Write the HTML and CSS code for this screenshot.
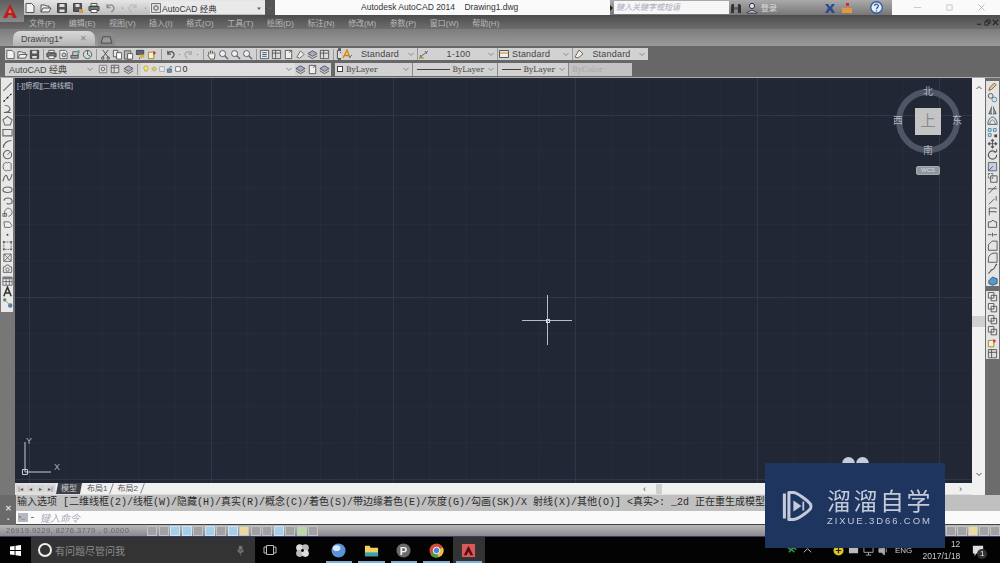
FILE: index.html
```html
<!DOCTYPE html>
<html lang="zh">
<head>
<meta charset="utf-8">
<title>AutoCAD 2014</title>
<link rel="stylesheet" href="styles.css">
</head>
<body>
<svg class="sprite" width="0" height="0">
<defs>
<symbol id="file" viewBox="0 0 12 12"><path d="M2 1.500h5.500L10 4v6.500H2z" fill="#f2f2f2" stroke="#555"/></symbol>
<symbol id="open" viewBox="0 0 12 12"><path d="M1 10V3h4l1 1h3v2M1 10l2-4h8l-2 4z" fill="#eee" stroke="#555"/></symbol>
<symbol id="save" viewBox="0 0 12 12"><path d="M1.500 1.500h9v9h-9z" fill="#555" stroke="#444"/><path d="M3.500 2h5v3h-5zM3.500 7.500h5V10h-5z" fill="#ddd"/></symbol>
<symbol id="saveas" viewBox="0 0 12 12"><path d="M1.500 1.500h8v8h-8z" fill="#556" stroke="#444"/><path d="M3.500 2h4v3h-4z" fill="#ddd"/><path d="M7 7h4v4H7z" fill="#d8964a"/></symbol>
<symbol id="print" viewBox="0 0 12 12"><path d="M3 1.500h6V4H3z" fill="#eee" stroke="#555"/><path d="M1 4.500h10v4H1z" fill="#777" stroke="#444"/><path d="M3 7.500h6v3H3z" fill="#fff" stroke="#555"/></symbol>
<symbol id="preview" viewBox="0 0 12 12"><path d="M2 1.500h6l2 2v7H2z" fill="#eee" stroke="#666"/><circle cx="6.500" cy="6.500" r="2.200" fill="#bcd" stroke="#555"/></symbol>
<symbol id="plot" viewBox="0 0 12 12"><path d="M3 3h6v4H3z" fill="#ccd" stroke="#555"/><path d="M1 7h8v3H1z" fill="#999" stroke="#555"/><circle cx="9" cy="3" r="2" fill="#6a9"/></symbol>
<symbol id="globe" viewBox="0 0 12 12"><circle cx="6" cy="6" r="4.500" fill="#cdd" stroke="#555"/><path d="M6 1.500V6l3 2" fill="none" stroke="#555"/></symbol>
<symbol id="cut" viewBox="0 0 12 12"><path d="M3 1l6 8M9 1L3 9" stroke="#444" fill="none"/><circle cx="3" cy="10" r="1.300" fill="none" stroke="#444"/><circle cx="9" cy="10" r="1.300" fill="none" stroke="#444"/></symbol>
<symbol id="copy" viewBox="0 0 12 12"><path d="M1.500 1.500h5v7h-5z" fill="#eee" stroke="#555"/><path d="M5 4h5.500v7H5z" fill="#fff" stroke="#555"/></symbol>
<symbol id="paste" viewBox="0 0 12 12"><path d="M1.500 2h7v9h-7z" fill="#bbb" stroke="#555"/><path d="M5 5h5.500v6H5z" fill="#fff" stroke="#555"/></symbol>
<symbol id="match" viewBox="0 0 12 12"><path d="M1.500 1.500h8V6h-8z" fill="#567" stroke="#444"/><path d="M5 6h5v3.500H5z" fill="#d8b04a"/><path d="M5 9.500V11" stroke="#444"/></symbol>
<symbol id="block" viewBox="0 0 12 12"><path d="M1.500 3.500h6v7h-6z" fill="#eee" stroke="#a80"/><path d="M7 2l3 2-3 3z" fill="#c33"/></symbol>
<symbol id="undo" viewBox="0 0 12 12"><path d="M3 5c2-3 6-3 7 1 0 2-1 3-3 4M3 2v3.500h3.500" fill="none" stroke="#555" stroke-width="1.300"/></symbol>
<symbol id="redo" viewBox="0 0 12 12"><path d="M9 5C7 2 3 2 2 6c0 2 1 3 3 4M9 2v3.500H5.500" fill="none" stroke="#aaa" stroke-width="1.300"/></symbol>
<symbol id="caret" viewBox="0 0 12 12"><path d="M4 5.500h4L6 8z" fill="#666"/></symbol>
<symbol id="hand" viewBox="0 0 12 12"><path d="M3 6V3m2 2V1.500M7 5V2m2 3.500V3.500M3 6L2 6.500 4.500 11H9l1-5.500" fill="#eee" stroke="#555"/></symbol>
<symbol id="zoom" viewBox="0 0 12 12"><circle cx="5" cy="5" r="3.300" fill="#eef" stroke="#555"/><path d="M7.500 7.500L11 11" stroke="#555" stroke-width="1.400"/></symbol>
<symbol id="panel" viewBox="0 0 12 12"><path d="M1.500 1.500h9v9h-9z" fill="#eee" stroke="#555"/><path d="M3.500 4h5M3.500 6h5M3.500 8h5" stroke="#357"/></symbol>
<symbol id="panel2" viewBox="0 0 12 12"><path d="M1.500 1.500h9v9h-9z" fill="#ddd" stroke="#555"/><path d="M1.500 4.500h9M5 1.500v9" stroke="#555"/></symbol>
<symbol id="sheet" viewBox="0 0 12 12"><path d="M2.500 1.500h7v9h-7z" fill="#eee" stroke="#555"/><path d="M6.500 4l3-2.500" stroke="#555"/></symbol>
<symbol id="help" viewBox="0 0 12 12"><path d="M1.500 1.500h9v9h-9z" fill="#ddd" stroke="#444"/><path d="M4.500 4.500c0-2 3-2 3 0 0 1-1.500 1-1.500 2.500M6 8.200v1" fill="none" stroke="#333"/></symbol>
<symbol id="line" viewBox="0 0 12 12"><path d="M1.500 10.500l9-9" stroke="#666" stroke-width="1.200"/></symbol>
<symbol id="xline" viewBox="0 0 12 12"><path d="M1.500 10.500l9-9" stroke="#666"/><circle cx="6" cy="6" r="1" fill="#222"/><circle cx="2.500" cy="9.500" r=".9" fill="#222"/><circle cx="9.500" cy="2.500" r=".9" fill="#222"/></symbol>
<symbol id="pline" viewBox="0 0 12 12"><path d="M3 1.500c5 0 7 3 5 5.500-1 1.500-4 2-6 2M3 9h7" fill="none" stroke="#666" stroke-width="1.200"/></symbol>
<symbol id="poly" viewBox="0 0 12 12"><path d="M6 1.200L11 5 9 10.800H3L1 5z" fill="none" stroke="#666" stroke-width="1.100"/></symbol>
<symbol id="rect" viewBox="0 0 12 12"><path d="M1 2.500h10v7H1z" fill="none" stroke="#666" stroke-width="1.200"/></symbol>
<symbol id="arc" viewBox="0 0 12 12"><path d="M1.500 10.500c0-5 4-8 9-8" fill="none" stroke="#666" stroke-width="1.300"/></symbol>
<symbol id="circle" viewBox="0 0 12 12"><circle cx="6" cy="6" r="4.500" fill="none" stroke="#666" stroke-width="1.200"/><path d="M6 6l3-3" stroke="#666"/></symbol>
<symbol id="cloud" viewBox="0 0 12 12"><path d="M2 3c1-2 3-2 4-1 1-1 3-1 4 1v6c-1 2-3 1-4 1-2 1-3 0-4-1C1 7 1 5 2 3z" fill="none" stroke="#666"/></symbol>
<symbol id="spline" viewBox="0 0 12 12"><path d="M1 10c2-8 4-8 5-4s3 4 5-4" fill="none" stroke="#666" stroke-width="1.200"/></symbol>
<symbol id="ellipse" viewBox="0 0 12 12"><ellipse cx="6" cy="6" rx="5" ry="3" fill="none" stroke="#666" stroke-width="1.200"/></symbol>
<symbol id="earc" viewBox="0 0 12 12"><path d="M2 6c1-4 8-4 9 0s-4 4-6 3" fill="none" stroke="#666" stroke-width="1.200"/></symbol>
<symbol id="insert" viewBox="0 0 12 12"><path d="M3 11V5l3-3c3 0 5 2 5 5 0 2-2 4-4 4M1 8h4v3H1z" fill="none" stroke="#666"/></symbol>
<symbol id="mkblock" viewBox="0 0 12 12"><path d="M2 4h6l3 4-2 2H3z" fill="#eee" stroke="#666"/></symbol>
<symbol id="dot" viewBox="0 0 12 12"><circle cx="6" cy="6" r="1.100" fill="#444"/></symbol>
<symbol id="hatch" viewBox="0 0 12 12"><path d="M2 2h8v8H2z" fill="none" stroke="#666" stroke-dasharray="2 1"/><path d="M1 1h2v2H1zM9 1h2v2H9zM1 9h2v2H1zM9 9h2v2H9z" fill="#666"/></symbol>
<symbol id="grad" viewBox="0 0 12 12"><path d="M2 2l8 8M10 2l-8 8M2 2h8v8H2z" fill="none" stroke="#666"/></symbol>
<symbol id="region" viewBox="0 0 12 12"><path d="M1.500 4h2l1-2h3l1 2h2v6h-9z" fill="none" stroke="#666"/><circle cx="6" cy="7" r="1.800" fill="none" stroke="#666"/></symbol>
<symbol id="table" viewBox="0 0 12 12"><path d="M1 2h10v9H1z" fill="#eee" stroke="#666"/><path d="M1 2h10v2.500H1z" fill="#778"/><path d="M1 7h10M4.500 4.500V11M8 4.500V11" stroke="#666"/></symbol>
<symbol id="txt" viewBox="0 0 12 12"><path d="M2 11L6 1l4 10M3.500 7.500h5" fill="none" stroke="#333" stroke-width="1.700"/></symbol>
<symbol id="addsel" viewBox="0 0 12 12"><circle cx="3" cy="3" r="1.800" fill="#4a8a4a"/><circle cx="9" cy="9" r="2.400" fill="#57a"/><path d="M3 3l6 6" stroke="#7a7"/></symbol>
<symbol id="pencil" viewBox="0 0 12 12"><path d="M2 10l1-3 5-5 2 2-5 5z" fill="#e8c890" stroke="#764"/></symbol>
<symbol id="copyobj" viewBox="0 0 12 12"><circle cx="4" cy="4" r="2.600" fill="none" stroke="#555"/><circle cx="8" cy="8" r="2.600" fill="none" stroke="#48a"/></symbol>
<symbol id="mirror" viewBox="0 0 12 12"><path d="M6 1.500l4 9H2z" fill="#89a" stroke="#555"/><path d="M6 1v10" stroke="#eee"/></symbol>
<symbol id="offset" viewBox="0 0 12 12"><path d="M1 10c0-5 3-8 5-8s5 3 5 8z" fill="none" stroke="#555"/><path d="M3 10c0-3 2-5 3-5s3 2 3 5" fill="none" stroke="#48a"/></symbol>
<symbol id="array" viewBox="0 0 12 12"><path d="M1.500 1.500h3v3h-3zM7 1.500h3v3H7zM1.500 7h3v3h-3z" fill="none" stroke="#48a"/><path d="M8 8h3v3H8z" fill="#444"/></symbol>
<symbol id="move" viewBox="0 0 12 12"><path d="M6 1v10M1 6h10M6 1L4.500 3h3zM6 11L4.500 9h3zM1 6l2-1.500v3zM11 6L9 4.500v3z" fill="#555" stroke="#555"/></symbol>
<symbol id="rotate" viewBox="0 0 12 12"><path d="M9.500 3.500A4.500 4.500 0 1 0 10.500 6" fill="none" stroke="#555" stroke-width="1.200"/><path d="M7 3h3.500V0" fill="none" stroke="#555"/></symbol>
<symbol id="scale" viewBox="0 0 12 12"><path d="M1.500 1.500h9v9h-9z" fill="#ccd" stroke="#567"/><path d="M1.500 10.500l5-5" stroke="#456"/></symbol>
<symbol id="stretch" viewBox="0 0 12 12"><path d="M1.500 1.500h5v5h-5z" fill="none" stroke="#555" stroke-dasharray="2 1"/><path d="M4 4h7v7H4z" fill="none" stroke="#555"/></symbol>
<symbol id="trim" viewBox="0 0 12 12"><path d="M2 10L10 2M1 5h10" stroke="#555" fill="none"/></symbol>
<symbol id="extend" viewBox="0 0 12 12"><path d="M2 10l6-6M10 1v5" stroke="#555" fill="none"/></symbol>
<symbol id="brk" viewBox="0 0 12 12"><path d="M2.500 10V2H10M2.500 6H10M10 2v1M10 6v1" stroke="#555" fill="none"/></symbol>
<symbol id="brk2" viewBox="0 0 12 12"><path d="M1.500 4h3l1-1.500h2L8.500 4h2v6h-9z" fill="none" stroke="#555"/></symbol>
<symbol id="join" viewBox="0 0 12 12"><path d="M1 6h4M7 6h4M6 4v4" stroke="#555"/></symbol>
<symbol id="chamfer" viewBox="0 0 12 12"><path d="M1.500 11V5l4-4H11v10z" fill="none" stroke="#555"/></symbol>
<symbol id="fillet" viewBox="0 0 12 12"><path d="M1.500 11V7c0-3 3-6 6-6H11v10z" fill="none" stroke="#555"/></symbol>
<symbol id="blend" viewBox="0 0 12 12"><path d="M1 11c3 0 2-4 5-4s2-5 5-6" fill="none" stroke="#555" stroke-width="1.200"/></symbol>
<symbol id="explode" viewBox="0 0 12 12"><path d="M2 6l4-4 5 2v5l-5 2-4-2z" fill="#5a9ac8" stroke="#357"/></symbol>
<symbol id="draw" viewBox="0 0 12 12"><path d="M1.500 1.500h6v6h-6z" fill="#eee" stroke="#555"/><path d="M4.500 4.500h6v6h-6z" fill="none" stroke="#555"/></symbol>
<symbol id="bulb" viewBox="0 0 12 12"><path d="M6 1a3.500 3.500 0 0 1 2 6.300V9H4V7.300A3.500 3.500 0 0 1 6 1z" fill="#f2e27a" stroke="#a93"/></symbol>
<symbol id="sun" viewBox="0 0 12 12"><circle cx="6" cy="6" r="2.300" fill="#f0d860" stroke="#a93"/><path d="M6 1v1.500M6 9.500V11M1 6h1.500M9.500 6H11M2.500 2.500l1 1M8.500 8.500l1 1M2.500 9.500l1-1M8.500 3.500l1-1" stroke="#a93"/></symbol>
<symbol id="lock" viewBox="0 0 12 12"><path d="M2 6h6v5H2z" fill="#79b" stroke="#357"/><path d="M6 6V3.500c0-2 3-2 3 0" fill="none" stroke="#357"/></symbol>
<symbol id="box" viewBox="0 0 12 12"><path d="M2.500 2.500h7v7h-7z" fill="#fff" stroke="#444"/></symbol>
<symbol id="layers" viewBox="0 0 12 12"><path d="M1 5l5-3 5 3-5 3z" fill="#aac" stroke="#555"/><path d="M1 7.500l5 3 5-3" fill="none" stroke="#555"/></symbol>
<symbol id="gear" viewBox="0 0 12 12"><path d="M1.500 1.500h9v9h-9z" fill="#ddd" stroke="#777"/><circle cx="6" cy="6" r="2.200" fill="none" stroke="#555"/></symbol>
<symbol id="txtstyle" viewBox="0 0 12 12"><path d="M2 10L6 2l3 8M3.500 7.500h4" fill="none" stroke="#c80" stroke-width="1.300"/><path d="M8 10l3-3" stroke="#56a"/></symbol>
<symbol id="dim" viewBox="0 0 12 12"><path d="M1 10l9-7M2 7l2 3M7 3l2 3" stroke="#666" fill="none"/><path d="M1 10h5" stroke="#c80"/></symbol>
<symbol id="tbl2" viewBox="0 0 12 12"><path d="M1.500 2.500h9v7h-9z" fill="#eee" stroke="#555"/><path d="M1.500 5h9" stroke="#c80"/></symbol>
<symbol id="ml" viewBox="0 0 12 12"><path d="M2 9l4-7 4 4-5 4z" fill="#eee" stroke="#765"/></symbol>
<symbol id="chev" viewBox="0 0 8 8"><path d="M1.500 3l2.500 2.500L6.500 3" fill="none" stroke="#888" stroke-width="1"/></symbol>
</defs>
</svg>

<div class="app">
  <header class="titlebar">
    <div class="logo-btn"><svg class="logo-a" viewBox="0 0 16 16"><path d="M8 1l7 14H11L9.500 12h-3L5 15H1z" fill="#b8201c"/><path d="M6 10h4L8 5.500z" fill="#e86a60"/></svg></div>
    <div class="qat">
      <svg class="ti"><use href="#file"/></svg><svg class="ti"><use href="#open"/></svg><svg class="ti"><use href="#save"/></svg><svg class="ti"><use href="#saveas"/></svg><svg class="ti"><use href="#print"/></svg><svg class="ti dimmed"><use href="#undo"/></svg><svg class="ti small"><use href="#caret"/></svg><svg class="ti dimmed"><use href="#redo"/></svg><svg class="ti small"><use href="#caret"/></svg>
      <div class="ws-combo"><svg class="ti"><use href="#gear"/></svg><span class="ws-name">AutoCAD 经典</span><svg class="ti tail"><use href="#caret"/></svg></div>
    </div>
    <div class="qat-end"><svg class="ti"><use href="#caret"/></svg></div>
    <div class="title">Autodesk AutoCAD 2014 &nbsp;&nbsp; Drawing1.dwg</div>
    <div class="infobar">
      <span class="play"></span>
      <span class="search">键入关键字或短语</span>
      <svg class="ti bino" viewBox="0 0 12 12"><path d="M1 11V4l1-2h2v9zM11 11V4l-1-2H8v9z" fill="#333"/><path d="M4 5h4v3H4z" fill="#666"/></svg>
      <svg class="ti user" viewBox="0 0 12 12"><circle cx="6" cy="4" r="2.600" fill="#dde" stroke="#334"/><path d="M1 11c1-3 9-3 10 0z" fill="#eef" stroke="#334"/></svg>
      <span class="login">登录</span>
      <span class="spacer"></span>
      <svg class="ti x-ex" viewBox="0 0 12 12"><path d="M1 2h3l2 3 2-3h3L8 6l3 5H8L6 8l-2 3H1l3-5z" fill="#2c4a8e"/></svg>
      <svg class="ti cart" viewBox="0 0 12 12"><path d="M5 1h3v3H5z" fill="#d24"/><path d="M1 6h10v5H1z" fill="#e09a3c"/></svg>
      <svg class="ti help-i" viewBox="0 0 12 12"><circle cx="6" cy="6" r="5.300" fill="#e8eef8" stroke="#2d5c9e" stroke-width="1.200"/><path d="M4.300 4.600c0-2.400 3.600-2.200 3.400 0C7.600 6 6 6 6 7.500M6 8.500v1.200" fill="none" stroke="#2d5c9e" stroke-width="1.200"/></svg>
    </div>
    <div class="winctl">
      <svg class="wc" viewBox="0 0 12 12"><path d="M1 6h10" stroke="#bbb"/></svg>
      <svg class="wc" viewBox="0 0 12 12"><path d="M2.500 2.500h7v7h-7z" fill="none" stroke="#bbb"/></svg>
      <svg class="wc" viewBox="0 0 12 12"><path d="M2 2l8 8M10 2l-8 8" stroke="#aaa"/></svg>
    </div>
  </header>

  <nav class="menubar">
    <span>文件(F)</span><span>编辑(E)</span><span>视图(V)</span><span>插入(I)</span><span>格式(O)</span><span>工具(T)</span><span>绘图(D)</span><span>标注(N)</span><span>修改(M)</span><span>参数(P)</span><span>窗口(W)</span><span>帮助(H)</span>
    <div class="mdi">
      <svg viewBox="0 0 8 8"><path d="M1 6h5" stroke="#222" stroke-width="1.200"/></svg>
      <svg viewBox="0 0 8 8"><path d="M1 3h4v4H1zM3 3V1h4v4H5" fill="none" stroke="#222"/></svg>
      <svg viewBox="0 0 8 8"><path d="M1 1l6 6M7 1L1 7" stroke="#222" stroke-width="1.200"/></svg>
    </div>
  </nav>

  <div class="tabbar">
    <div class="doc-tab"><span>Drawing1*</span><span class="tab-x">✕</span></div>
    <div class="new-tab"><svg viewBox="0 0 14 10"><path d="M1 9l2-7h8l2 7z" fill="#999" stroke="#444"/></svg></div>
  </div>

  <div class="toolrow row1">
    <div class="strip icons-strip">
      <svg class="ti"><use href="#file"/></svg><svg class="ti"><use href="#open"/></svg><svg class="ti"><use href="#save"/></svg><i class="sep"></i>
      <svg class="ti"><use href="#print"/></svg><svg class="ti"><use href="#preview"/></svg><svg class="ti"><use href="#plot"/></svg><svg class="ti"><use href="#globe"/></svg><i class="sep"></i>
      <svg class="ti"><use href="#cut"/></svg><svg class="ti"><use href="#copy"/></svg><svg class="ti"><use href="#paste"/></svg><svg class="ti"><use href="#match"/></svg><svg class="ti"><use href="#block"/></svg><i class="sep"></i>
      <svg class="ti"><use href="#undo"/></svg><svg class="ti tiny"><use href="#caret"/></svg><svg class="ti"><use href="#redo"/></svg><svg class="ti tiny"><use href="#caret"/></svg><i class="sep"></i>
      <svg class="ti"><use href="#hand"/></svg><svg class="ti"><use href="#zoom"/></svg><svg class="ti"><use href="#zoom"/></svg><svg class="ti"><use href="#zoom"/></svg><i class="sep"></i>
      <svg class="ti"><use href="#panel"/></svg><svg class="ti"><use href="#panel2"/></svg><svg class="ti"><use href="#sheet"/></svg><svg class="ti"><use href="#ml"/></svg><svg class="ti"><use href="#layers"/></svg><svg class="ti"><use href="#panel2"/></svg><i class="sep"></i>
      <svg class="ti"><use href="#help"/></svg>
    </div>
    <div class="strip style-strip">
      <div class="sc w77"><svg class="ti"><use href="#txtstyle"/></svg><span>Standard</span><svg class="chev"><use href="#chev"/></svg></div>
      <div class="sc w80"><svg class="ti"><use href="#dim"/></svg><span>1-100</span><svg class="chev"><use href="#chev"/></svg></div>
      <div class="sc w75"><svg class="ti"><use href="#tbl2"/></svg><span class="left">Standard</span><svg class="chev"><use href="#chev"/></svg></div>
      <div class="sc w75"><svg class="ti"><use href="#ml"/></svg><span>Standard</span><svg class="chev"><use href="#chev"/></svg></div>
    </div>
  </div>

  <div class="toolrow row2">
    <div class="strip ws2"><span class="ws2-name">AutoCAD 经典</span><svg class="chev"><use href="#chev"/></svg><svg class="ti"><use href="#gear"/></svg><svg class="ti"><use href="#panel2"/></svg></div>
    <div class="strip layer">
      <svg class="ti"><use href="#layers"/></svg><i class="sep"></i>
      <div class="layer-combo"><svg class="li"><use href="#bulb"/></svg><svg class="li"><use href="#sun"/></svg><svg class="li faded"><use href="#box"/></svg><svg class="li"><use href="#lock"/></svg><svg class="li"><use href="#box"/></svg><span>0</span><svg class="chev"><use href="#chev"/></svg></div>
      <svg class="ti"><use href="#layers"/></svg><svg class="ti"><use href="#sheet"/></svg><svg class="ti"><use href="#layers"/></svg>
    </div>
    <div class="strip props">
      <div class="pc p-color"><i class="swatch"></i><span>ByLayer</span><svg class="chev"><use href="#chev"/></svg></div>
      <div class="pc p-line1"><i class="ln long"></i><span>ByLayer</span><svg class="chev"><use href="#chev"/></svg></div>
      <div class="pc p-line2"><i class="ln"></i><span>ByLayer</span><svg class="chev"><use href="#chev"/></svg></div>
      <div class="pc p-plot"><span>ByColor</span></div>
    </div>
  </div>

  <main class="workspace">
    <aside class="lefttools">
      <svg class="vi"><use href="#line"/></svg><svg class="vi"><use href="#xline"/></svg><svg class="vi"><use href="#pline"/></svg><svg class="vi"><use href="#poly"/></svg><svg class="vi"><use href="#rect"/></svg><svg class="vi"><use href="#arc"/></svg><svg class="vi"><use href="#circle"/></svg><svg class="vi"><use href="#cloud"/></svg><svg class="vi"><use href="#spline"/></svg><svg class="vi"><use href="#ellipse"/></svg><svg class="vi"><use href="#earc"/></svg><svg class="vi"><use href="#insert"/></svg><svg class="vi"><use href="#mkblock"/></svg><svg class="vi"><use href="#dot"/></svg><svg class="vi"><use href="#hatch"/></svg><svg class="vi"><use href="#grad"/></svg><svg class="vi"><use href="#region"/></svg><svg class="vi"><use href="#table"/></svg><svg class="vi"><use href="#txt"/></svg><svg class="vi"><use href="#addsel"/></svg>
    </aside>

    <div class="drawing">
      <div class="viewport">
        <div class="view-label">[-][俯视][二维线框]</div>

        <div class="viewcube">
          <div class="ring"></div>
          <div class="cube"><span>上</span></div>
          <span class="dir n">北</span><span class="dir s">南</span><span class="dir w">西</span><span class="dir e">东</span>
          <div class="wcs">WCS</div>
        </div>

        <div class="crosshair"><i class="ch-h"></i><i class="ch-v"></i><i class="ch-b"></i></div>

        <div class="ucs">
          <svg viewBox="0 0 40 40" class="ucs-svg"><path d="M6 36V6M6 36h26" stroke="#c8ccd2" fill="none"/><path d="M3.500 33.500h5v5h-5z" fill="none" stroke="#c8ccd2"/></svg>
          <span class="ax y">Y</span><span class="ax x">X</span>
        </div>
      </div>

      <div class="layoutbar">
        <div class="nav"><span>|◂</span><span>◂</span><span>▸</span><span>▸|</span></div>
        <span class="ltab on">模型</span><span class="ltab">布局1</span><i class="slash"></i><span class="ltab">布局2</span><i class="slash"></i>
        <div class="hscroll"><span class="arrow">‹</span><i class="hthumb"></i><span class="arrow end">›</span></div>
      </div>
    </div>

    <div class="vscroll">
      <svg class="vs-arrow up" viewBox="0 0 8 8"><path d="M1.500 5L4 2.500 6.500 5" fill="none" stroke="#555"/></svg>
      <i class="vthumb"></i>
      <svg class="vs-arrow" viewBox="0 0 8 8"><path d="M1.500 3L4 5.500 6.500 3" fill="none" stroke="#555"/></svg>
    </div>

    <aside class="righttools">
      <div class="rgroup">
        <svg class="vi"><use href="#pencil"/></svg><svg class="vi"><use href="#copyobj"/></svg><svg class="vi"><use href="#mirror"/></svg><svg class="vi"><use href="#offset"/></svg><svg class="vi"><use href="#array"/></svg><svg class="vi"><use href="#move"/></svg><svg class="vi"><use href="#rotate"/></svg><svg class="vi"><use href="#scale"/></svg><svg class="vi"><use href="#stretch"/></svg><svg class="vi"><use href="#trim"/></svg><svg class="vi"><use href="#extend"/></svg><svg class="vi"><use href="#brk"/></svg><svg class="vi"><use href="#brk2"/></svg><svg class="vi"><use href="#join"/></svg><svg class="vi"><use href="#chamfer"/></svg><svg class="vi"><use href="#fillet"/></svg><svg class="vi"><use href="#blend"/></svg><svg class="vi"><use href="#explode"/></svg>
      </div>
      <div class="rgroup second">
        <svg class="vi"><use href="#draw"/></svg><svg class="vi"><use href="#draw"/></svg><svg class="vi"><use href="#draw"/></svg><svg class="vi"><use href="#draw"/></svg><svg class="vi"><use href="#block"/></svg><svg class="vi"><use href="#panel2"/></svg>
      </div>
    </aside>
  </main>

  <section class="cmd">
    <div class="cmd-grip"><span class="grip-dots"></span><span class="cmd-x">✕</span><span class="cmd-wrench">▪</span></div>
    <div class="cmd-body">
      <div class="cmd-hist">输入选项 [二维线框(2)/线框(W)/隐藏(H)/真实(R)/概念(C)/着色(S)/带边缘着色(E)/灰度(G)/勾画(SK)/X 射线(X)/其他(O)] &lt;真实&gt;: _2d 正在重生成模型。</div>
      <div class="cmd-input"><span class="prompt-ic">&gt;_</span><span class="prompt-caret"></span><span class="prompt">键入命令</span></div>
    </div>
  </section>

  <footer class="statusbar">
    <span class="coords">26919.9229, 8276.3779 , 0.0000</span>
    <div class="st-icons">
      <i class="st"></i><i class="st"></i><i class="st blue"></i><i class="st blue"></i><i class="st"></i><i class="st blue"></i><i class="st"></i><i class="st blue"></i><i class="st amber"></i><i class="st"></i><i class="st"></i><i class="st blue"></i><i class="st"></i><i class="st green"></i><i class="st"></i>
    </div>
    <div class="st-right"><i class="st"></i><i class="st"></i><i class="st amber"></i><i class="st"></i><i class="st"></i></div>
  </footer>

  <div class="taskbar">
    <svg class="win" viewBox="0 0 12 12"><path d="M0 1.700l5-.7v4.500H0zM6 .9l6-.9v5.500H6zM0 6.500h5V11l-5-.7zM6 6.500h6V12l-6-.9z" fill="#fff"/></svg>
    <div class="t-search">
      <i class="cortana"></i><span class="t-text">有问题尽管问我</span>
      <svg class="mic" viewBox="0 0 10 14"><path d="M3 1h4v7H3zM1 6c0 6 8 6 8 0M5 11v3" fill="#777" stroke="#777"/></svg>
    </div>
    <svg class="task-view" viewBox="0 0 14 12"><path d="M3.500 1.500h7v9h-7zM3.500 3H1v6h2.500M10.500 3H13v6h-2.500" fill="none" stroke="#bbb"/></svg>
    <div class="app-ic w1"><svg viewBox="0 0 16 16"><circle cx="5" cy="5" r="3.800" fill="#ddd"/><circle cx="11" cy="5" r="3.800" fill="#bbb"/><circle cx="5" cy="11" r="3.800" fill="#bbb"/><circle cx="11" cy="11" r="3.800" fill="#ddd"/><circle cx="8" cy="8" r="1.500" fill="#000"/></svg></div>
    <div class="app-ic run"><svg viewBox="0 0 16 16"><circle cx="8" cy="8" r="7.500" fill="#5b93d8"/><ellipse cx="6" cy="5.500" rx="4" ry="3" fill="#dbe9f8"/></svg></div>
    <div class="app-ic run"><svg viewBox="0 0 16 16"><path d="M1 3h5l1 2h8v9H1z" fill="#f0d060"/><path d="M1 10h14v4H1z" fill="#3aa0b8"/></svg></div>
    <div class="app-ic run"><svg viewBox="0 0 16 16"><circle cx="8" cy="8" r="7.500" fill="#6a6a6a"/><text x="8" y="12.500" class="p-glyph">P</text></svg></div>
    <div class="app-ic run"><svg viewBox="0 0 16 16"><circle cx="8" cy="8" r="7.500" fill="#d84a3a"/><path d="M8 8L1.500 12A7.500 7.500 0 0 0 10 15.300z" fill="#4aa04a"/><path d="M8 8l6.800-3.200A7.500 7.500 0 0 1 10 15.300z" fill="#eac13c"/><circle cx="8" cy="8" r="3.500" fill="#4a85d8" stroke="#fff"/></svg></div>
    <div class="app-ic run active"><svg viewBox="0 0 16 16"><path d="M1 1h14v14H1z" fill="#d8585c"/><path d="M8 3l5 10h-3L8 9l-2 4H3z" fill="#5a0c10"/></svg></div>
    <div class="tray">
      <svg class="tr" viewBox="0 0 12 12"><path d="M1 3l3 2 3-2 3 2M2 8l3-3 3 3" fill="none" stroke="#3a9a4a" stroke-width="1.500"/></svg>
      <svg class="tr up" viewBox="0 0 12 12"><path d="M2 8l4-4 4 4" fill="none" stroke="#ccc"/></svg>
      <svg class="tr gap" viewBox="0 0 12 12"><circle cx="6" cy="6" r="5.500" fill="#dcc81c"/><path d="M3 6h6M6 3v6" stroke="#222" stroke-width="1.300"/></svg>
      <svg class="tr" viewBox="0 0 12 12"><path d="M1 3h10v6H1z" fill="#bbb"/></svg>
      <svg class="tr" viewBox="0 0 12 12"><path d="M1 2h10v6H1zM6 8v3M3 11h6" fill="none" stroke="#aaa"/></svg>
      <svg class="tr" viewBox="0 0 12 12"><path d="M1 4h3l3-3v10L4 8H1zM9 4v4" fill="#aaa" stroke="#aaa"/></svg>
      <span class="eng">ENG</span>
      <div class="clock"><span>12</span><span>2017/1/18</span></div>
      <div class="notif"><svg viewBox="0 0 14 14"><path d="M1 1h12v9H5l-2 3v-3H1z" fill="#ddd"/></svg><b>1</b></div>
    </div>
  </div>

  <aside class="watermark-ears"><i></i><i></i></aside>
  <aside class="watermark">
    <svg class="wm-logo" viewBox="0 0 40 40"><path d="M6 6v28M11 5h5c4 0 16 9 19 13 1 2 1 3 0 5-3 4-15 12-19 12h-5z" fill="none" stroke="#c4cad8" stroke-width="3.400" stroke-linejoin="round"/><path d="M16 14l9 6-9 6z" fill="#c4cad8"/><path d="M27 15v10" stroke="#c4cad8" stroke-width="2"/></svg>
    <div class="wm-text"><div class="wm-cn">溜溜自学</div><div class="wm-en">ZIXUE.3D66.COM</div></div>
  </aside>
</div>
</body>
</html>
```

FILE: styles.css
```css
* { box-sizing: border-box; margin: 0; padding: 0; }
html, body { width: 1000px; height: 563px; overflow: hidden; background: #000; }
body { font-family: "Liberation Sans", "Noto Sans CJK SC", sans-serif; }
i { display: block; font-style: normal; }
.sprite { position: absolute; }
.app { position: relative; width: 1000px; height: 563px; display: flex; flex-direction: column; overflow: hidden; filter: blur(.5px); }

/* title bar */
.titlebar { height: 15px; display: flex; background: #fafafa; flex: none; }
.logo-btn { width: 24px; height: 22px; background: linear-gradient(#5e5e5e, #8a8a8a); display: flex; align-items: center; justify-content: center; padding-right: 5px; z-index: 2; flex: none; }
.logo-a { width: 16px; height: 16px; }
.ti { width: 12px; height: 12px; flex: none; }
.qat { width: 241px; flex: none; display: flex; align-items: center; gap: 1px; background: linear-gradient(#e6e6e6, #bdbdbd); }
.qat > .ti { margin-right: 3px; }
.qat > .small { width: 5px; margin-right: 1px; }
.dimmed { opacity: .55; }
.ws-combo { width: 115px; flex: none; height: 13px; margin-left: auto; background: #e9e9e9; display: flex; align-items: center; font-size: 8.500px; color: #333; }
.ws-name { flex: 1; white-space: nowrap; }
.qat-end { width: 10px; background: #555; flex: none; display: flex; align-items: center; justify-content: center; }
.title { width: 335px; padding-left: 86px; font-size: 8.500px; line-height: 15px; color: #333; white-space: nowrap; flex: none; }
.infobar { width: 282px; flex: none; background: linear-gradient(#aaa, #777); display: flex; align-items: center; }
.play { width: 0; height: 0; flex: none; margin: 0 1px 0 0; border-left: 3px solid #222; border-top: 3px solid transparent; border-bottom: 3px solid transparent; }
.search { width: 115px; flex: none; height: 13px; background: #f6f6f6; color: #aab; font-size: 8px; font-style: italic; line-height: 13px; padding-left: 2px; }
.bino { margin-left: 1px; }
.user { margin-left: 4px; }
.login { margin-left: 3px; font-size: 8px; color: #ddd; }
.spacer { flex: 1; }
.x-ex { margin-right: 5px; }
.cart { margin-right: 16.500px; }
.help-i { margin-right: 9.500px; width: 13px; height: 13px; }
.winctl { flex: 1; display: flex; align-items: center; justify-content: space-around; padding: 0 3px 0 9px; }
.wc { width: 9px; height: 9px; }

/* menu */
.menubar { height: 14px; flex: none; display: flex; align-items: center; gap: 13.500px; padding-left: 29px; font-size: 8px; color: #b8b8b8; background: linear-gradient(#4c4c4c, #6e6e6e); }
.mdi { margin-left: auto; display: flex; gap: 1px; padding-right: 1px; }
.mdi svg { width: 7px; height: 7px; }

/* document tabs */
.tabbar { height: 17px; flex: none; background: linear-gradient(#7d7d7d, #9a9a9a); display: flex; align-items: flex-end; padding-left: 13px; gap: 3px; }
.doc-tab { width: 82px; height: 15px; background: linear-gradient(#d8d8d8, #b4b4b4); border-radius: 7px 7px 0 0; display: flex; justify-content: space-between; align-items: center; padding: 0 8px; font-size: 9px; color: #444; }
.tab-x { font-size: 8px; color: #888; }
.new-tab { width: 17px; height: 14px; background: #8a8a8a; border-radius: 5px 5px 0 0; display: flex; align-items: center; justify-content: center; }
.new-tab svg { width: 13px; height: 9px; }

/* toolbars */
.toolrow { flex: none; background: #676767; display: flex; padding-left: 5px; }
.row1 { height: 16px; gap: 3px; align-items: center; }
.row2 { height: 16px; border-bottom: 1px solid #aaa; align-items: flex-start; padding-top: 1px; }
.strip { height: 12.500px; background: #d2d2d2; display: flex; align-items: center; }
.icons-strip { width: 333px; }
.icons-strip .ti { width: 11px; height: 11px; margin-right: .95px; }
.icons-strip .tiny { width: 5px; }
.sep { width: 1px; height: 11px; background: #999; margin: 0 2.500px 0 2px; flex: none; }
.style-strip { width: 307px; }
.sc { display: flex; align-items: center; height: 100%; font-size: 9px; color: #444; border-right: 1px solid #999; }
.sc:last-child { border: 0; }
.sc span { flex: 1; text-align: center; letter-spacing: .2px; }
.sc span.left { text-align: left; padding-left: 2px; }
.w77 { width: 77px; } .w80 { width: 80px; } .w75 { width: 75px; }
.chev { width: 8px; height: 8px; flex: none; margin-right: 2px; }
.ws2 { width: 118px; font-size: 9px; color: #444; }
.ws2-name { width: 81px; padding-left: 4px; }
.ws2 .ti { width: 10px; height: 10px; margin-left: 2px; }
.layer { width: 208px; margin-left: 0; padding-left: 0; }
.layer .ti { width: 11px; height: 11px; margin-right: 1px; }
.layer-combo { width: 157px; height: 100%; background: #dedede; display: flex; align-items: center; font-size: 9px; color: #333; padding-left: 1px; }
.layer-combo span { flex: 1; padding-left: 1px; }
.li { width: 8px; height: 8px; flex: none; margin-right: 0; }
.faded { opacity: .5; }
.props { width: 297px; margin-left: 4px; font-family: "DejaVu Serif", serif; font-size: 7.500px; color: #444; background: #d2d2d2; }
.pc { height: 100%; display: flex; align-items: center; justify-content: flex-end; border-right: 1px solid #888; padding-left: 2px; gap: 3px; }
.pc span { flex: none; }
.p-color { width: 78px; justify-content: flex-start; }
.p-color .chev { margin-left: auto; }
.p-line1 { width: 85px; }
.p-line2 { width: 71px; }
.p-plot { width: 63px; border: 0; color: #a8a8a8; background: #c2c2c2; justify-content: flex-start; padding-left: 3px; }
.swatch { width: 6px; height: 6px; border: 1px solid #444; background: #fff; }
.ln { width: 25px; height: 1px; background: #444; flex: 1; margin-left: 2px; }
.ln.long { width: 30px; }

/* workspace */
.workspace { flex: none; height: 417px; display: flex; background: #6c6c6c; }
.lefttools { width: 15px; flex: none; padding: 3px 1px 0 1px; display: flex; flex-direction: column; align-items: center; background: linear-gradient(#e8e8e8, #e8e8e8) 1px 0 / 12px 234px no-repeat, #777; }
.vi { width: 11px; height: 11.400px; flex: none; }
.drawing { width: 957px; flex: none; display: flex; flex-direction: column; }
.viewport {
  position: relative; height: 405px;
  background-color: #222735;
  background-image:
    linear-gradient(90deg, rgba(120,130,150,.13) 1px, transparent 1px),
    linear-gradient(rgba(120,130,150,.13) 1px, transparent 1px),
    linear-gradient(90deg, rgba(120,130,150,.05) 1px, transparent 1px),
    linear-gradient(rgba(120,130,150,.05) 1px, transparent 1px);
  background-size: 182px 182px, 182px 182px, 36.400px 36.400px, 36.400px 36.400px;
  background-position: 14px 37px, 14px 37px, 14px 37px, 14px 37px;
}
.view-label { position: absolute; left: 2px; top: 2px; font-size: 7px; color: #bfc4cc; }
.viewcube { position: absolute; left: 876px; top: 8px; width: 74px; height: 92px; color: #aab; }
.ring { position: absolute; left: 5px; top: 3px; width: 64px; height: 64px; border: 6px solid #4f5564; border-radius: 50%; }
.cube { position: absolute; left: 24px; top: 22px; width: 26px; height: 27px; background: #c4c4c4; color: #8a8a8a; font-size: 15px; line-height: 25px; text-align: center; }
.dir { position: absolute; font-size: 10px; line-height: 12px; color: #b0b4be; }
.n { left: 32px; top: 0; } .s { left: 32px; top: 59px; } .w { left: 2px; top: 29px; } .e { left: 61px; top: 29px; }
.wcs { position: absolute; left: 25px; top: 80px; width: 24px; height: 9px; border-radius: 2px; background: #8f95a3; border: 1px solid #aaa; color: #ddd; font-size: 6px; line-height: 7px; text-align: center; }
.crosshair { position: absolute; left: 507px; top: 217px; width: 50px; height: 50px; }
.ch-h { position: absolute; left: 0; top: 25px; width: 50px; height: 1px; background: #b8bcc4; }
.ch-v { position: absolute; left: 25px; top: 0; width: 1px; height: 50px; background: #b8bcc4; }
.ch-b { position: absolute; left: 23.500px; top: 23.500px; width: 4px; height: 4px; border: 1px solid #d8dbe0; }
.ucs { position: absolute; left: 4px; top: 358px; width: 44px; height: 40px; }
.ucs-svg { width: 40px; height: 40px; }
.ax { position: absolute; font-size: 9px; color: #aab0b8; }
.ax.y { left: 7px; top: 0; } .ax.x { left: 35px; top: 26px; }
.layoutbar { height: 12px; background: #f0f0f0; display: flex; align-items: center; font-size: 8px; color: #555; border-bottom: 1px solid #ddd; }
.nav { display: flex; gap: 1px; width: 41px; padding-left: 1px; flex: none; background: #e0e0e0; height: 100%; align-items: center; }
.nav span { width: 9px; font-size: 6px; text-align: center; color: #555; background: #d4d4d4; }
.ltab { padding: 0 4px; line-height: 11px; flex: none; }
.ltab.on { background: #3e4048; color: #ccc; padding: 0 5px; margin-right: 1px; clip-path: polygon(8% 0, 100% 0, 92% 100%, 0 100%); }
.slash { width: 1px; height: 11px; background: #888; transform: rotate(20deg); margin-right: 1px; }
.hscroll { flex: 1; display: flex; align-items: center; height: 100%; padding-left: 499px; }
.arrow { font-size: 9px; color: #444; width: 9px; }
.hthumb { width: 6px; height: 10px; margin-left: 4px; background: #cfcfcf; }
.arrow.end { margin-left: auto; margin-right: 4px; }
.vscroll { width: 13px; flex: none; background: #f1f1f1; display: flex; flex-direction: column; align-items: center; padding-top: 6px; }
.vs-arrow { width: 8px; height: 8px; flex: none; margin-top: auto; margin-bottom: 17px; }
.vs-arrow.up { margin: 0; }
.vthumb { width: 100%; height: 11px; background: #d0d0d0; margin-top: 224px; }
.righttools { width: 15px; flex: none; padding: 3px 1px 0 1px; background: #6c6c6c; display: flex; flex-direction: column; }
.rgroup { background: #e4e4e4; display: flex; flex-direction: column; align-items: center; }
.second { margin-top: 5px; }

/* command window */
.cmd { height: 30px; flex: none; display: flex; background: #9c9c9c; }
.cmd-grip { width: 16px; flex: none; background: #6a6a6a; display: flex; flex-direction: column; align-items: center; color: #ddd; }
.grip-dots { height: 8px; }
.cmd-x { font-size: 8px; line-height: 12px; font-weight: bold; }
.cmd-wrench { font-size: 6px; line-height: 8px; }
.cmd-body { flex: 1; display: flex; flex-direction: column; }
.cmd-hist { height: 16px; background: #c0c0c0; font-family: "Liberation Mono", "Noto Sans CJK SC", monospace; font-size: 10px; line-height: 16px; color: #2c2c2c; white-space: nowrap; padding-left: 1px; overflow: hidden; }
.cmd-input { height: 14px; background: #fafafa; display: flex; align-items: center; font-size: 10px; color: #aab; border-bottom: 1px solid #444; }
.prompt-ic { font-size: 6px; width: 10px; height: 9px; line-height: 9px; background: #b4b8c0; color: #556; margin-left: 2px; flex: none; }
.prompt-caret { width: 3px; height: 1px; background: #777; margin: 0 6px 0 3px; }
.prompt { font-style: italic; }

/* status bar */
.statusbar { height: 12px; flex: none; background: linear-gradient(#b8b8b8, #8a8a8a); display: flex; align-items: center; border-bottom: 1px solid #3c3a78; padding-left: 6px; }
.coords { width: 141px; font-size: 7.500px; color: #666; letter-spacing: .5px; flex: none; white-space: nowrap; }
.st-icons { display: flex; gap: 1.500px; }
.st { width: 10px; height: 10px; background: #a2a2a2; border: 1px solid #c4c4c4; }
.st.blue { background: #a8cfe8; border-color: #cfe4f2; }
.st.amber { background: #ecd9a0; }
.st.green { background: #b8d8a8; }
.st-right { margin-left: auto; display: flex; gap: 1px; }

/* taskbar */
.taskbar { flex: 1; background: #030303; display: flex; align-items: center; color: #ccc; }
.win { width: 11px; height: 11px; margin-left: 10px; flex: none; }
.t-search { width: 224px; height: 100%; margin-left: 10px; background: #333; display: flex; align-items: center; flex: none; }
.cortana { width: 14px; height: 14px; border: 2px solid #eee; border-radius: 50%; margin-left: 7px; }
.t-text { font-size: 10px; color: #8c8c8c; margin-left: 3px; flex: 1; }
.mic { width: 7px; height: 11px; margin-right: 11px; }
.task-view { width: 14px; height: 12px; margin-left: 8px; flex: none; }
.app-ic { width: 32.500px; height: 100%; display: flex; align-items: center; justify-content: center; flex: none; position: relative; }
.app-ic svg { width: 15px; height: 15px; }
.w1 { margin-left: 9px; margin-right: 4px; }
.run::after { content: ""; position: absolute; left: 3px; right: 3px; bottom: 0; height: 2px; background: #7fb0d8; }
.active { background: #333; }
.p-glyph { font-family: "Liberation Sans", sans-serif; font-weight: bold; font-size: 12px; fill: #f0f0f0; text-anchor: middle; }
.tray { flex: 1; display: flex; align-items: center; padding-left: 302px; }
.tr { width: 11px; height: 11px; margin-right: 4px; flex: none; }
.up { margin-right: 20px; }
.eng { font-size: 8px; margin-left: 2px; color: #ccc; flex: none; }
.clock { display: flex; flex-direction: column; align-items: flex-end; width: 52px; margin-left: -4px; font-size: 8.500px; line-height: 12px; flex: none; color: #ccc; }
.notif { position: relative; width: 14px; height: 14px; margin-left: 12px; flex: none; }
.notif svg { width: 12px; height: 12px; }
.notif b { position: absolute; right: -1px; bottom: -2px; width: 10px; height: 10px; border-radius: 50%; background: #333; font-size: 8px; line-height: 10px; text-align: center; color: #eee; font-weight: normal; }

/* watermark overlay */
.watermark { position: absolute; left: 765px; top: 463px; width: 180px; height: 85px; background: #1e3560; display: flex; align-items: center; padding: 0 0 0 14px; gap: 12px; }
.wm-logo { width: 36px; height: 36px; flex: none; }
.wm-text { color: #c4cad8; white-space: nowrap; }
.wm-cn { font-family: "Noto Sans CJK SC", sans-serif; font-size: 24px; line-height: 30px; letter-spacing: 2.500px; }
.wm-en { font-family: "Liberation Sans", sans-serif; font-size: 9.500px; line-height: 12px; letter-spacing: 1.900px; }
.watermark-ears { position: absolute; left: 842px; top: 457px; width: 28px; height: 8px; display: flex; gap: 1px; }
.watermark-ears i { width: 13px; height: 14px; border-radius: 50%; background: #c8ccd4; }
```
